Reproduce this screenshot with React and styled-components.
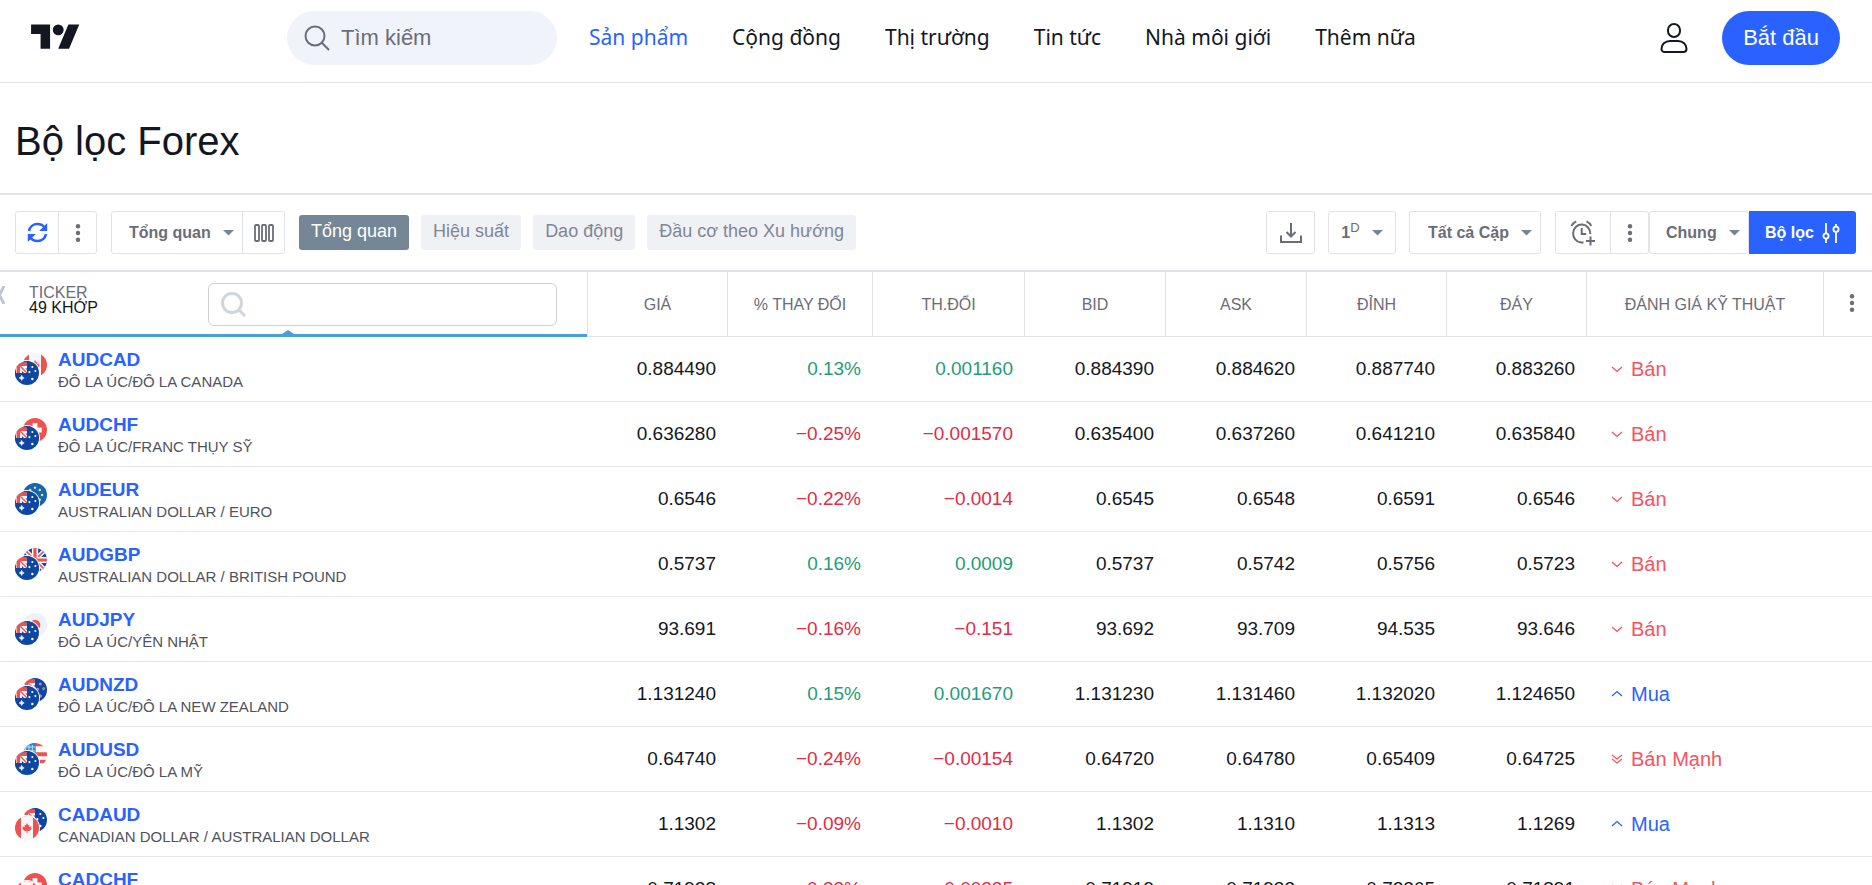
import React from "react";
import styled, { createGlobalStyle } from "styled-components";

const GlobalStyle = createGlobalStyle`
  *, *::before, *::after { box-sizing: border-box; }
  body {
    margin: 0;
    background: #fff;
    color: #131722;
    font-family: "Liberation Sans", Arial, sans-serif;
  }
  button, input, select { font: inherit; color: inherit; }
`;

const Page = styled.div`
  display: flex;
  flex-direction: column;
  height: 100vh;
  overflow: hidden;
`;

/* ---------- header ---------- */

const Header = styled.header`
  flex: none;
  display: flex;
  align-items: center;
  padding: 11px 32px 17px 31px;
  border-bottom: 1px solid #e0e3eb;
`;

const LogoLink = styled.a`
  display: flex;
  width: 256px;
  color: #131722;
`;

const SearchPill = styled.label`
  display: flex;
  align-items: center;
  gap: 10px;
  width: 270px;
  height: 54px;
  padding: 0 16px;
  border-radius: 27px;
  background: #f0f3fa;
  color: #6a6d78;
`;

const PillInput = styled.input`
  flex: 1;
  min-width: 0;
  padding: 0;
  border: 0;
  outline: 0;
  background: transparent;
  font-size: 22px;
  line-height: 28px;
  &::placeholder { color: #6a6d78; opacity: 1; }
`;

const Nav = styled.nav`
  display: flex;
  flex: 1;
  gap: 44px;
  margin-left: 32px;
  padding-bottom: 2px;
`;

const NavLink = styled.a`
  font-family: "Noto Sans", "Open Sans", sans-serif;
  font-size: 21px;
  line-height: 28px;
  white-space: nowrap;
  text-decoration: none;
  color: ${(p) => (p.$active ? "#2962ff" : "#131722")};
`;

const UserButton = styled.button`
  display: flex;
  margin-right: 34px;
  padding: 0;
  border: 0;
  background: transparent;
`;

const StartButton = styled.button`
  height: 54px;
  padding: 0 21px;
  border: 0;
  border-radius: 27px;
  background: #2962ff;
  color: #fff;
  font-size: 22px;
`;

const Title = styled.h1`
  flex: none;
  margin: 0;
  padding: 34px 15px 28px;
  border-bottom: 2px solid #e0e3eb;
  font-size: 40px;
  line-height: 48px;
  font-weight: 400;
`;

/* ---------- toolbar ---------- */

const Toolbar = styled.div`
  flex: none;
  display: flex;
  align-items: center;
  padding: 16px 16px 16px 15px;
  border-bottom: 2px solid #e0e3eb;
`;

const Group = styled.div`
  display: flex;
  height: 43px;
  margin-right: ${(p) => p.$gap || 0}px;
  border: 1px solid #e0e3eb;
  border-radius: 3px;
  overflow: hidden;
  color: #6a6d78;
  && > * + * { border-left: 1px solid #e0e3eb; }
`;

const ToolButton = styled.button`
  display: flex;
  align-items: center;
  justify-content: center;
  gap: 12px;
  width: ${(p) => p.$width}px;
  padding: 0;
  border: 0;
  background: transparent;
  font-size: 16px;
  font-weight: 700;
`;

const SelectBox = styled.label`
  display: grid;
  align-items: center;
  width: ${(p) => p.$width}px;
  & > * { grid-area: 1 / 1; }
  & > svg { justify-self: end; margin-right: 8px; pointer-events: none; }
`;

const Select = styled.select`
  appearance: none;
  width: 100%;
  height: 100%;
  padding: 0 0 0 ${(p) => p.$pad}px;
  border: 0;
  outline: 0;
  background: transparent;
  font-size: 16px;
  font-weight: 700;
`;

const Sup = styled.sup`
  font-size: 13px;
  line-height: 12px;
  font-weight: 400;
`;

const Tabs = styled.div`
  display: flex;
  flex: 1;
  gap: 12px;
`;

const Tab = styled.button`
  height: 35px;
  padding: 0 12px 2px;
  border: 0;
  border-radius: 3px;
  font-size: 18px;
  white-space: nowrap;
  background: ${(p) => (p.$active ? "#758696" : "#f0f1f5")};
  color: ${(p) => (p.$active ? "#fff" : "#7f8794")};
`;

const FilterButton = styled.button`
  display: flex;
  align-items: center;
  justify-content: center;
  gap: 8px;
  width: 107px;
  height: 43px;
  padding: 0;
  border: 0;
  border-radius: 0 3px 3px 0;
  background: #2962ff;
  color: #fff;
  font-size: 16px;
  font-weight: 700;
`;

/* ---------- table ---------- */

const TableArea = styled.main`
  flex: 1;
  min-height: 0;
  overflow: auto;
  scrollbar-width: none;
`;

const Table = styled.table`
  width: 100%;
  table-layout: fixed;
  border-collapse: separate;
  border-spacing: 0;
`;

const HeadCell = styled.th`
  height: 65px;
  padding: 1px 0 0 ${(p) => (p.$menu ? 8 : 0)}px;
  border-bottom: 1px solid #e0e3eb;
  border-left: 1px solid #e0e3eb;
  color: #6a6d78;
  font-size: 16px;
  font-weight: 400;
`;

const TickerHead = styled.th`
  height: 65px;
  padding: 0;
  border-bottom: 3px solid #46a0dc;
  font-size: 16px;
  line-height: 15px;
  font-weight: 400;
  text-align: left;
`;

const TickerHeadInner = styled.div`
  position: relative;
  display: flex;
  align-items: center;
  height: 62px;
  padding: 3px 30px 0 0;
`;

const ClearIcon = styled.svg`
  flex: none;
  margin-bottom: 20px;
`;

const HeadLabel = styled.div`
  flex: 1;
  margin-bottom: 10px;
  padding-left: 24px;
  color: #6a6d78;
`;

const Matches = styled.div`
  color: #131722;
`;

const TickerSearch = styled.label`
  display: flex;
  align-items: center;
  gap: 8px;
  width: 349px;
  height: 43px;
  padding: 0 12px;
  border: 1px solid #cfd1d8;
  border-radius: 6px;
`;

const TickerInput = styled.input`
  flex: 1;
  min-width: 0;
  border: 0;
  outline: 0;
  background: transparent;
`;

const SortMark = styled.span`
  position: absolute;
  bottom: 0;
  left: 49%;
  transform: translateX(-50%);
  border: 6px solid transparent;
  border-top: 0;
  border-bottom: 4px solid #46a0dc;
`;

const MenuButton = styled.button`
  display: inline-flex;
  padding: 0;
  border: 0;
  background: transparent;
  color: inherit;
`;

const Cell = styled.td`
  height: 65px;
  padding: 0 11px 0 0;
  border-bottom: 1px solid #e6e7ea;
  text-align: right;
  font-size: 19px;
  color: ${(p) => ({ up: "#1f9d78", down: "#df2c47" }[p.$tone] || "#131722")};
`;

const TickerCell = styled.td`
  height: 65px;
  padding: 0 0 0 15px;
  border-bottom: 1px solid #e6e7ea;
`;

const TickerInner = styled.div`
  display: flex;
  align-items: center;
  gap: 11px;
`;

const TickerText = styled.div`
  padding-top: 2px;
`;

const Symbol = styled.a`
  display: block;
  color: #2962ff;
  font-size: 19px;
  line-height: 24px;
  font-weight: 700;
  text-decoration: none;
`;

const PairName = styled.div`
  color: #50535e;
  font-size: 15px;
  line-height: 20px;
`;

const RatingCell = styled.td`
  height: 65px;
  padding: 0 0 0 25px;
  border-bottom: 1px solid #e6e7ea;
`;

const Rating = styled.div`
  display: flex;
  align-items: center;
  gap: 8px;
  font-size: 20px;
  color: ${(p) => (p.$buy ? "#2962ff" : "#f7525f")};
`;

const FlagPair = styled.div`
  position: relative;
  flex: none;
  width: 32px;
  height: 32px;
`;

const FlagSlot = styled.span`
  position: absolute;
  display: flex;
  border-radius: 50%;
  ${(p) => (p.$front ? "left: 0; bottom: 0; box-shadow: 0 0 0 1px #fff;" : "right: 0; top: 0;")}
`;

const FlagSvg = styled.svg`
  width: 24px;
  height: 24px;
  border-radius: 50%;
`;

/* ---------- drawings ---------- */

const Logo = () => (
  <svg width="49" height="38" viewBox="0 0 36 28" fill="currentColor" aria-hidden="true">
    <path d="M14 22H7V11H0V4h14v18zM28 22h-8l7.5-18h8L28 22z" />
    <circle cx="20" cy="8" r="4" />
  </svg>
);

const SearchIcon = () => (
  <svg width="28" height="28" viewBox="0 0 28 28" fill="none" stroke="currentColor" strokeWidth="2" aria-hidden="true">
    <circle cx="12" cy="12" r="9.5" />
    <path d="M18.8 18.8 26 26" />
  </svg>
);

const FieldSearchIcon = () => (
  <svg width="26" height="26" viewBox="0 0 26 26" fill="none" stroke="#d1d4dc" strokeWidth="3" aria-hidden="true">
    <circle cx="11" cy="11" r="9.5" />
    <path d="M18 18l6 6" />
  </svg>
);

const UserIcon = () => (
  <svg width="28" height="32" viewBox="0 0 28 32" fill="none" stroke="#131722" strokeWidth="2" aria-hidden="true">
    <rect x="8" y="2" width="12" height="13" rx="6" />
    <path d="M10 19h8c5 0 8.500 3.500 8.500 7.700 0 2-1.300 3.300-3.200 3.300H4.700c-1.900 0-3.200-1.300-3.200-3.300C1.500 22.500 5 19 10 19z" />
  </svg>
);

const RefreshIcon = () => (
  <svg width="21" height="21" viewBox="0 0 21 21" fill="none" stroke="#2962ff" strokeWidth="2.600" aria-hidden="true">
    <path d="M2 9c.8-4.200 4.200-7 8.500-7 3.200 0 5.700 1.400 7.300 3.800" />
    <path d="M19 12c-.8 4.200-4.200 7-8.500 7-3.200 0-5.700-1.400-7.300-3.800" />
    <path d="M20.200 1v8h-8zM.8 20v-8h8z" fill="#2962ff" stroke="none" />
  </svg>
);

const DotsIcon = () => (
  <svg width="6" height="18" viewBox="0 0 6 18" fill="currentColor" aria-hidden="true">
    <circle cx="3" cy="2.200" r="2.200" />
    <circle cx="3" cy="9" r="2.200" />
    <circle cx="3" cy="15.800" r="2.200" />
  </svg>
);

const ArrowIcon = () => (
  <svg width="11" height="6" viewBox="0 0 11 6" fill="#758696" aria-hidden="true">
    <path d="M0 0h11L5.500 5.500z" />
  </svg>
);

const ColumnsIcon = () => (
  <svg width="20" height="18" viewBox="0 0 20 18" fill="none" stroke="currentColor" strokeWidth="1.800" aria-hidden="true">
    <rect x="1" y="1" width="4" height="16" rx="1" />
    <rect x="8" y="1" width="4" height="16" rx="1" />
    <rect x="15" y="1" width="4" height="16" rx="1" />
  </svg>
);

const DownloadIcon = () => (
  <svg width="22" height="20" viewBox="0 0 22 20" fill="none" stroke="currentColor" strokeWidth="2" aria-hidden="true">
    <path d="M11 0v13M6.500 9l4.500 4.500L15.500 9M1 12.500V19h20v-6.500" />
  </svg>
);

const AlarmIcon = () => (
  <svg width="26" height="26" viewBox="0 0 26 26" fill="none" stroke="currentColor" strokeWidth="2" aria-hidden="true">
    <path d="M13.500 22.500H11A8.600 9 0 1 1 20.300 14" />
    <path d="M11.700 8v6h4.500M1.500 6C2.300 4 4 2.300 6.200 1.300M16.500 1.300C18.700 2.300 20.500 4 21.300 6M20.500 16.500v9M16 21h9" />
  </svg>
);

const SlidersIcon = () => (
  <svg width="18" height="20" viewBox="0 0 18 20" fill="none" stroke="currentColor" strokeWidth="1.800" aria-hidden="true">
    <circle cx="4" cy="13" r="2.600" />
    <path d="M4 0v10.400M4 15.600V20M14 3.600V1M14 8.800V20" />
    <circle cx="14" cy="6.200" r="2.600" />
  </svg>
);

const CloseMark = () => (
  <ClearIcon width="5" height="18" viewBox="0 0 5 18" fill="none" stroke="#c1c4cd" strokeWidth="3" aria-hidden="true">
    <path d="M-5 0 4 18M4 0-5 18" />
  </ClearIcon>
);

const RATING_PATHS = {
  buy: "M1 8l5-4.500L11 8",
  sell: "M1 4l5 4.500L11 4",
  strongSell: "M1 2l5 4 5-4M1 6l5 4 5-4",
};

const RatingIcon = ({ kind }) => (
  <svg width="12" height="12" viewBox="0 0 12 12" fill="none" stroke="currentColor" strokeWidth="1.300" aria-hidden="true">
    <path d={RATING_PATHS[kind]} />
  </svg>
);

const Canton = () => (
  <>
    <path d="M3 3l6 6" stroke="#fff" strokeWidth="3.200" />
    <path d="M3 1v8M0 3.500h9" stroke="#fff" strokeWidth="4.400" />
    <path d="M2.500 1v8M0 2.500h9" stroke="#ef5350" strokeWidth="2.600" />
    <path d="M4 4l5 5" stroke="#ef5350" strokeWidth="1.100" />
  </>
);

const FLAGS = {
  AUD: (
    <>
      <path d="M0 0h18v18H0z" fill="#0d47a1" />
      <Canton />
      <path d="M0 9h9v4H0zM9 0h2v10H9z" fill="#0d47a1" />
      <path d="M5 10.800l.6 1.300 1.300.6-1.300.6L5 14.600l-.6-1.300-1.300-.6 1.300-.6z" fill="#fff" stroke="#fff" strokeWidth=".5" />
      <circle cx="13" cy="4.500" r=".8" fill="#fff" />
      <circle cx="10.800" cy="8.300" r=".8" fill="#fff" />
      <circle cx="15.300" cy="7.500" r=".8" fill="#fff" />
      <circle cx="13" cy="13.500" r=".9" fill="#fff" />
    </>
  ),
  NZD: (
    <>
      <path d="M0 0h18v18H0z" fill="#0d47a1" />
      <Canton />
      <g fill="#ef5350" stroke="#fff" strokeWidth=".3">
        <circle cx="13" cy="4.500" r=".8" />
        <circle cx="11" cy="8.500" r=".8" />
        <circle cx="15.500" cy="8" r=".8" />
        <circle cx="13" cy="13.500" r=".9" />
      </g>
    </>
  ),
  CAD: (
    <>
      <path d="M0 0h18v18H0z" fill="#f5f5fa" />
      <path d="M0 0h4.500v18H0zM13.500 0H18v18h-4.500z" fill="#ef5350" />
      <path d="M9 5.200l.9 1.700.9-.3-.2 1.700 1.700-.4-.3 1.200.7.500-2 1.700H9.300v1.500h-.6v-1.500H7.300l-2-1.700.7-.5-.3-1.200 1.700.4-.2-1.700.9.3z" fill="#ef5350" />
    </>
  ),
  CHF: (
    <>
      <path d="M0 0h18v18H0z" fill="#ef5350" />
      <path d="M7.200 4h3.600v3.200H14v3.600h-3.200V14H7.200v-3.200H4V7.200h3.200z" fill="#fff" />
    </>
  ),
  EUR: (
    <>
      <path d="M0 0h18v18H0z" fill="#1565b5" />
      <g fill="#ffe25a">
        <circle cx="9" cy="3.500" r=".9" />
        <circle cx="12.600" cy="5.200" r=".9" />
        <circle cx="14.300" cy="9" r=".9" />
        <circle cx="5.400" cy="5.200" r=".9" />
        <circle cx="12.600" cy="12.600" r=".9" />
      </g>
    </>
  ),
  GBP: (
    <>
      <path d="M0 0h18v18H0z" fill="#0d47a1" />
      <path d="M0 0l18 18M18 0L0 18" stroke="#fff" strokeWidth="3.400" />
      <path d="M0 0l18 18M18 0L0 18" stroke="#ef5350" strokeWidth="1.200" />
      <path d="M9 0v18M0 9h18" stroke="#fff" strokeWidth="4.600" />
      <path d="M9 0v18M0 9h18" stroke="#ef5350" strokeWidth="2.400" />
    </>
  ),
  JPY: (
    <>
      <path d="M0 0h18v18H0z" fill="#f0f1f8" />
      <circle cx="9" cy="9" r="4" fill="#ef5350" />
    </>
  ),
  USD: (
    <>
      <path d="M0 0h18v18H0z" fill="#fff" />
      <path d="M0 0h18v2.500H0zM0 7h18v3H0zM0 12.500h18v2.700H0z" fill="#ef5350" />
      <path d="M0 0h9.500v9H0z" fill="#2a86d8" />
      <path d="M2 1.500v6M4.500 1.500v6M7 1.500v6M1 3h8M1 6h8" stroke="#cfe4f8" strokeWidth=".7" />
    </>
  ),
};

const Flag = ({ code }) => (
  <FlagSvg viewBox="0 0 18 18" aria-hidden="true">
    {FLAGS[code]}
  </FlagSvg>
);

/* ---------- data ---------- */

const NAV = ["Sản phẩm", "Cộng đồng", "Thị trường", "Tin tức", "Nhà môi giới", "Thêm nữa"];
const TABS = ["Tổng quan", "Hiệu suất", "Dao động", "Đầu cơ theo Xu hướng"];
const COLUMNS = [
  ["GIÁ", 140],
  ["% THAY ĐỔI", 145],
  ["TH.ĐỔI", 152],
  ["BID", 141],
  ["ASK", 141],
  ["ĐỈNH", 140],
  ["ĐÁY", 140],
  ["ĐÁNH GIÁ KỸ THUẬT", 237],
];
const RATING_LABELS = { buy: "Mua", sell: "Bán", strongSell: "Bán Mạnh" };

const ROWS = [
  ["AUD", "CAD", "ĐÔ LA ÚC/ĐÔ LA CANADA", ["0.884490", "0.13%", "0.001160", "0.884390", "0.884620", "0.887740", "0.883260"], "sell"],
  ["AUD", "CHF", "ĐÔ LA ÚC/FRANC THỤY SỸ", ["0.636280", "−0.25%", "−0.001570", "0.635400", "0.637260", "0.641210", "0.635840"], "sell"],
  ["AUD", "EUR", "AUSTRALIAN DOLLAR / EURO", ["0.6546", "−0.22%", "−0.0014", "0.6545", "0.6548", "0.6591", "0.6546"], "sell"],
  ["AUD", "GBP", "AUSTRALIAN DOLLAR / BRITISH POUND", ["0.5737", "0.16%", "0.0009", "0.5737", "0.5742", "0.5756", "0.5723"], "sell"],
  ["AUD", "JPY", "ĐÔ LA ÚC/YÊN NHẬT", ["93.691", "−0.16%", "−0.151", "93.692", "93.709", "94.535", "93.646"], "sell"],
  ["AUD", "NZD", "ĐÔ LA ÚC/ĐÔ LA NEW ZEALAND", ["1.131240", "0.15%", "0.001670", "1.131230", "1.131460", "1.132020", "1.124650"], "buy"],
  ["AUD", "USD", "ĐÔ LA ÚC/ĐÔ LA MỸ", ["0.64740", "−0.24%", "−0.00154", "0.64720", "0.64780", "0.65409", "0.64725"], "strongSell"],
  ["CAD", "AUD", "CANADIAN DOLLAR / AUSTRALIAN DOLLAR", ["1.1302", "−0.09%", "−0.0010", "1.1302", "1.1310", "1.1313", "1.1269"], "buy"],
  ["CAD", "CHF", "ĐÔ LA CANADA/FRANC THỤY SỸ", ["0.71928", "−0.33%", "−0.00235", "0.71919", "0.71933", "0.72265", "0.71891"], "strongSell"],
];

const toneOf = (value, index) => {
  if (index !== 1 && index !== 2) return undefined;
  return value.startsWith("−") ? "down" : "up";
};

function DropDown({ label, value, width, pad }) {
  return (
    <SelectBox $width={width}>
      <Select $pad={pad} aria-label={label} defaultValue={value}>
        <option>{value}</option>
      </Select>
      <ArrowIcon />
    </SelectBox>
  );
}

function PairRow({ row }) {
  const [base, quote, name, values, rating] = row;
  return (
    <tr>
      <TickerCell>
        <TickerInner>
          <FlagPair>
            <FlagSlot><Flag code={quote} /></FlagSlot>
            <FlagSlot $front><Flag code={base} /></FlagSlot>
          </FlagPair>
          <TickerText>
            <Symbol href={`#${base}${quote}`}>{base + quote}</Symbol>
            <PairName>{name}</PairName>
          </TickerText>
        </TickerInner>
      </TickerCell>
      {values.map((v, i) => (
        <Cell key={i} $tone={toneOf(v, i)}>{v}</Cell>
      ))}
      <RatingCell colSpan={2}>
        <Rating $buy={rating === "buy"}>
          <RatingIcon kind={rating} />
          {RATING_LABELS[rating]}
        </Rating>
      </RatingCell>
    </tr>
  );
}

export default function App() {
  return (
    <Page>
      <GlobalStyle />
      <Header>
        <LogoLink href="#" aria-label="TradingView"><Logo /></LogoLink>
        <SearchPill>
          <SearchIcon />
          <PillInput type="search" placeholder="Tìm kiếm" aria-label="Tìm kiếm" />
        </SearchPill>
        <Nav>
          {NAV.map((item, i) => (
            <NavLink key={item} href="#" $active={i === 0}>{item}</NavLink>
          ))}
        </Nav>
        <UserButton aria-label="User"><UserIcon /></UserButton>
        <StartButton>Bắt đầu</StartButton>
      </Header>

      <Title>Bộ lọc Forex</Title>

      <Toolbar>
        <Group $gap={14}>
          <ToolButton $width={42} aria-label="Refresh"><RefreshIcon /></ToolButton>
          <ToolButton $width={38} aria-label="More"><DotsIcon /></ToolButton>
        </Group>
        <Group $gap={14}>
          <DropDown label="Columns set" value="Tổng quan" width={130} pad={17} />
          <ToolButton $width={42} aria-label="Columns"><ColumnsIcon /></ToolButton>
        </Group>
        <Tabs>
          {TABS.map((tab, i) => (
            <Tab key={tab} $active={i === 0}>{tab}</Tab>
          ))}
        </Tabs>
        <Group $gap={13}>
          <ToolButton $width={47} aria-label="Download"><DownloadIcon /></ToolButton>
        </Group>
        <Group $gap={13}>
          <ToolButton $width={66} aria-haspopup="listbox">
            <span>1<Sup>D</Sup></span>
            <ArrowIcon />
          </ToolButton>
        </Group>
        <Group $gap={14}>
          <DropDown label="Pairs" value="Tất cả Cặp" width={130} pad={18} />
        </Group>
        <Group>
          <ToolButton $width={54} aria-label="Create alert"><AlarmIcon /></ToolButton>
          <ToolButton $width={38} aria-label="More"><DotsIcon /></ToolButton>
        </Group>
        <Group>
          <DropDown label="Exchange" value="Chung" width={98} pad={16} />
        </Group>
        <FilterButton>
          Bộ lọc
          <SlidersIcon />
        </FilterButton>
      </Toolbar>

      <TableArea>
        <Table>
          <colgroup>
            <col width="587" />
            {COLUMNS.map(([name, width]) => (
              <col key={name} width={width} />
            ))}
            <col width="49" />
          </colgroup>
          <thead>
            <tr>
              <TickerHead>
                <TickerHeadInner>
                  <CloseMark />
                  <HeadLabel>
                    TICKER
                    <Matches>49 KHỚP</Matches>
                  </HeadLabel>
                  <TickerSearch>
                    <FieldSearchIcon />
                    <TickerInput type="text" aria-label="Ticker" />
                  </TickerSearch>
                  <SortMark />
                </TickerHeadInner>
              </TickerHead>
              {COLUMNS.map(([name]) => (
                <HeadCell key={name}>{name}</HeadCell>
              ))}
              <HeadCell $menu>
                <MenuButton aria-label="Columns menu"><DotsIcon /></MenuButton>
              </HeadCell>
            </tr>
          </thead>
          <tbody>
            {ROWS.map((row) => (
              <PairRow key={row[0] + row[1]} row={row} />
            ))}
          </tbody>
        </Table>
      </TableArea>
    </Page>
  );
}
